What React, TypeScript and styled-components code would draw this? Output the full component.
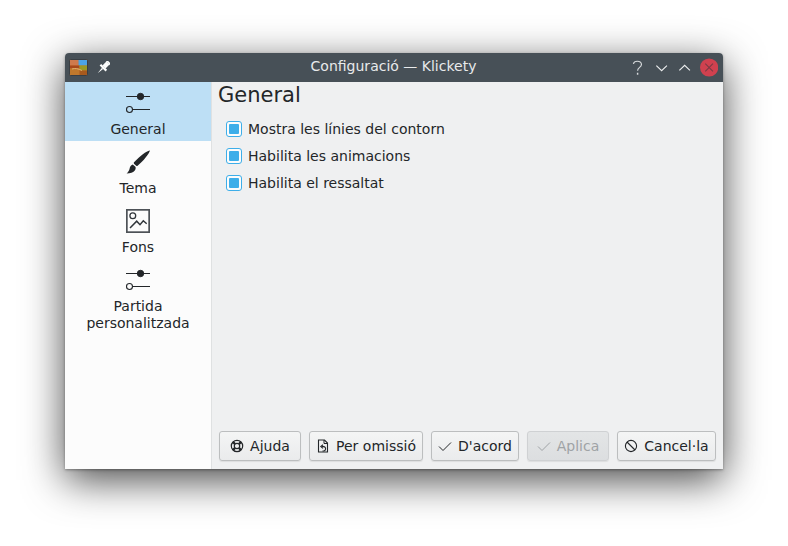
import React from "react";
import styled, { createGlobalStyle } from "styled-components";

const Global = createGlobalStyle`
  html, body { margin: 0; padding: 0; background: #fff; width: 788px; height: 546px; overflow: hidden; }
  body { font-family: "DejaVu Sans", sans-serif; font-size: 14px; color: #232629; }
`;

const Page = styled.div`
  padding: 53px 0 0 65px;
`;

const Window = styled.div`
  width: 658px;
  height: 416px;
  display: flex;
  flex-direction: column;
  border-radius: 4px 4px 0 0;
  overflow: hidden;
  box-shadow: 0 11px 40px rgba(0, 0, 0, 0.72), 0 1px 3px rgba(0, 0, 0, 0.35);
`;

const TitleBar = styled.div`
  height: 29px;
  flex: none;
  background: #475057;
  display: flex;
  align-items: center;
  padding: 0 5px 0 4px;
  color: #fcfcfc;
`;

const TitleLeft = styled.div`
  width: 90px;
  display: flex;
  align-items: center;
  gap: 8px;
`;

const Title = styled.div`
  flex: 1;
  text-align: center;
  font-size: 14px;
  line-height: 27px;
  padding-bottom: 2px;
  color: #e8eaeb;
`;

const TitleRight = styled.div`
  width: 90px;
  display: flex;
  align-items: center;
  justify-content: flex-end;
  gap: 6px;
`;

const Body = styled.div`
  flex: 1;
  display: flex;
  min-height: 0;
`;

const Sidebar = styled.div`
  width: 147px;
  flex: none;
  box-sizing: border-box;
  background: #fcfcfc;
  border-right: 1px solid #dfe1e2;
  display: flex;
  flex-direction: column;
`;

const SideItem = styled.div<{ $active?: boolean; $multi?: boolean }>`
  background: ${(p) => (p.$active ? "#bddff5" : "transparent")};
  height: ${(p) => (p.$multi ? "76px" : "59px")};
  display: flex;
  flex-direction: column;
  align-items: center;
  padding-top: 9px;
  box-sizing: border-box;
  font-size: 14px;
  line-height: 17px;
  text-align: center;
  svg { margin-bottom: 6px; flex: none; }
`;

const Main = styled.div`
  flex: 1;
  background: #eff0f1;
  display: flex;
  flex-direction: column;
  padding: 0 7px 8px 6px;
  min-width: 0;
`;

const Heading = styled.div`
  font-size: 21px;
  line-height: 26px;
  margin-bottom: 12px;
`;

const CheckList = styled.div`
  flex: 1;
  display: flex;
  flex-direction: column;
  gap: 10px;
  padding-left: 8px;
`;

const CheckRow = styled.div`
  display: flex;
  align-items: center;
  gap: 6px;
  height: 17px;
`;

const CheckBox = styled.span`
  width: 16px;
  height: 16px;
  box-sizing: border-box;
  border: 1px solid #3daee9;
  border-radius: 3px;
  background: #fcfcfc;
  display: flex;
  align-items: center;
  justify-content: center;
  &::after {
    content: "";
    width: 10px;
    height: 10px;
    background: #3daee9;
    border-radius: 1px;
  }
`;

const Buttons = styled.div`
  display: flex;
  justify-content: flex-end;
  gap: 8px;
`;

const Button = styled.div<{ $disabled?: boolean; $w: number }>`
  height: 30px;
  box-sizing: border-box;
  border: 1px solid ${(p) => (p.$disabled ? "#cfd1d3" : "#bcbebf")};
  border-radius: 3px;
  background: ${(p) => (p.$disabled ? "linear-gradient(#e3e5e6,#dcdee0)" : "linear-gradient(#f4f5f5,#eaebec)")};
  color: ${(p) => (p.$disabled ? "#9fa3a6" : "#232629")};
  display: flex;
  align-items: center;
  justify-content: center;
  gap: 6px;
  width: ${(p) => p.$w}px;
  box-shadow: 0 1px 1px rgba(0,0,0,0.08);
  svg { flex: none; }
`;

const Sliders = ({ bg }: { bg: string }) => (
  <svg width="24" height="24" viewBox="0 0 24 24" fill="none" stroke="#232629" strokeWidth="1">
    <path d="M0 5.5h24" />
    <circle cx="14.5" cy="5.5" r="3.2" fill="#232629" />
    <path d="M6 18.5h18" />
    <circle cx="3.5" cy="18.5" r="3" fill={bg} strokeWidth="1.1" />
  </svg>
);

const Brush = () => (
  <svg width="24" height="24" viewBox="0 0 24 24" fill="#232629">
    <path d="M23.6 0.4 C20.5 1 14 5.5 7.8 12.6 C7.6 13 7.8 13.6 8.2 14 L10.2 15.8 C10.6 16.2 11.2 16.2 11.6 15.8 C17.5 10.8 23 4 23.9 0.8 Z" />
    <path d="M6.8 14.4 C4.5 15 4 17 3.5 19 C3.1 20.6 2.2 22 0.6 23.6 C4 23.4 7.5 22.6 9 20.2 C9.8 18.8 9.9 17.6 9.4 16.8 Z" />
  </svg>
);

const ImageIcon = () => (
  <svg width="24" height="24" viewBox="0 0 24 24" fill="none" stroke="#31363b" strokeWidth="1.3">
    <rect x="0.85" y="0.85" width="22.3" height="22.3" stroke="#4d5257" strokeWidth="1.7" />
    <circle cx="6.8" cy="6.8" r="2.9" />
    <path d="M4 19 L10.7 12.2 L14 15.7 L17.3 11.8 L20.7 14.8" strokeWidth="1.5" />
  </svg>
);

const Pin = () => (
  <svg width="14" height="14" viewBox="0 0 14 14" fill="#fcfcfc">
    <g transform="rotate(45 7 7)">
      <rect x="4" y="-1.6" width="6" height="1.8" />
      <rect x="4.8" y="0" width="4.4" height="5.6" />
      <path d="M2.8 5.4 H11.2 V7.6 H2.8 Z" />
      <path d="M6.2 7.6 H7.8 L7 14.6 Z" />
    </g>
  </svg>
);

const AppIcon = () => (
  <svg width="19" height="17" viewBox="0 0 19 17">
    <rect x="0.5" y="0.5" width="18" height="16" rx="1" fill="#c8702c" stroke="#3a3f44" />
    <rect x="1" y="1" width="8.5" height="5.5" fill="#cf7a4d" />
    <rect x="9.5" y="1" width="8.5" height="5.5" fill="#4ba3e6" />
    <rect x="1" y="6.5" width="9.5" height="3" fill="#a8481c" />
    <rect x="10.5" y="6.5" width="7.5" height="5" fill="#9b9a24" />
    <rect x="1" y="9.5" width="9.5" height="6.5" fill="#c0782c" />
    <rect x="10.5" y="11.5" width="7.5" height="4.5" fill="#a85a1e" />
    <path d="M3 10 C6 9 9 9.5 13 11.5" stroke="#e0b070" fill="none" />
  </svg>
);

const HelpIcon = () => (
  <svg width="20" height="18" viewBox="0 0 20 18" fill="none" stroke="#d6d9db" strokeWidth="1.2">
    <path d="M5.6 4.6 C6 2.9 7.8 2 9.6 2 C12 2 14 3.2 14 5.4 C14 8.4 10 8.4 10 11.8" />
    <path d="M10 14 V16" strokeWidth="1.5" />
  </svg>
);

const TitleChevron = ({ up }: { up?: boolean }) => (
  <svg width="18" height="18" viewBox="0 0 18 18" fill="none" stroke="#eceeef" strokeWidth="1.2">
    <path d={up ? "M3.5 11.5 L9 6.2 L14.5 11.5" : "M3.5 6.5 L9 11.8 L14.5 6.5"} />
  </svg>
);

const CloseBtn = () => (
  <svg width="19" height="19" viewBox="0 0 19 19">
    <circle cx="9.5" cy="9.5" r="9.5" fill="#d0414f" />
    <path d="M5.5 5.5 L13.5 13.5 M13.5 5.5 L5.5 13.5" stroke="#7a3a44" strokeWidth="1.1" />
  </svg>
);

const Lifebuoy = () => (
  <svg width="14" height="14" viewBox="0 0 14 14" fill="none" stroke="#232629">
    <circle cx="7" cy="7" r="5.7" strokeWidth="1.2" />
    <circle cx="7" cy="7" r="2.7" strokeWidth="1.2" />
    <path d="M2.9 2.9 L5 5 M11.1 2.9 L9 5 M2.9 11.1 L5 9 M11.1 11.1 L9 9" strokeWidth="2.4" />
  </svg>
);

const DocReset = () => (
  <svg width="14" height="14" viewBox="0 0 14 14" fill="none" stroke="#232629">
    <path d="M2.5 1 H8.5 L11.5 4 V13 H2.5 Z" strokeWidth="1.1" />
    <path d="M8 1 V4.5 H11.5" strokeWidth="1" />
    <path d="M6 7.6 H8 A2.3 2.3 0 0 1 8 12 H6.5" strokeWidth="1.1" />
    <path d="M7 5.8 L4.8 7.6 L7 9.4" strokeWidth="1.1" />
  </svg>
);

const Check = ({ color = "#232629" }: { color?: string }) => (
  <svg width="14" height="14" viewBox="0 0 14 14" fill="none" stroke={color} strokeWidth="1">
    <path d="M1 7.5 L5 11.5 L13 3.5" />
  </svg>
);

const Cancel = () => (
  <svg width="14" height="14" viewBox="0 0 14 14" fill="none" stroke="#232629" strokeWidth="1.1">
    <circle cx="7" cy="7" r="5.6" />
    <path d="M3 3 L11 11" />
  </svg>
);

export default function App() {
  return (
    <Page>
      <Global />
      <Window>
        <TitleBar>
          <TitleLeft>
            <AppIcon />
            <Pin />
          </TitleLeft>
          <Title>Configuració — Klickety</Title>
          <TitleRight>
            <HelpIcon />
            <TitleChevron />
            <TitleChevron up />
            <CloseBtn />
          </TitleRight>
        </TitleBar>
        <Body>
          <Sidebar>
            <SideItem $active>
              <Sliders bg="#bddff5" />
              General
            </SideItem>
            <SideItem>
              <Brush />
              Tema
            </SideItem>
            <SideItem>
              <ImageIcon />
              Fons
            </SideItem>
            <SideItem $multi>
              <Sliders bg="#fcfcfc" />
              Partida
              <br />
              personalitzada
            </SideItem>
          </Sidebar>
          <Main>
            <Heading>General</Heading>
            <CheckList>
              <CheckRow><CheckBox />Mostra les línies del contorn</CheckRow>
              <CheckRow><CheckBox />Habilita les animacions</CheckRow>
              <CheckRow><CheckBox />Habilita el ressaltat</CheckRow>
            </CheckList>
            <Buttons>
              <Button $w={82}><Lifebuoy />Ajuda</Button>
              <Button $w={114}><DocReset />Per omissió</Button>
              <Button $w={88}><Check />D'acord</Button>
              <Button $w={82} $disabled><Check color="#9fa3a6" />Aplica</Button>
              <Button $w={99}><Cancel />Cancel·la</Button>
            </Buttons>
          </Main>
        </Body>
      </Window>
    </Page>
  );
}
